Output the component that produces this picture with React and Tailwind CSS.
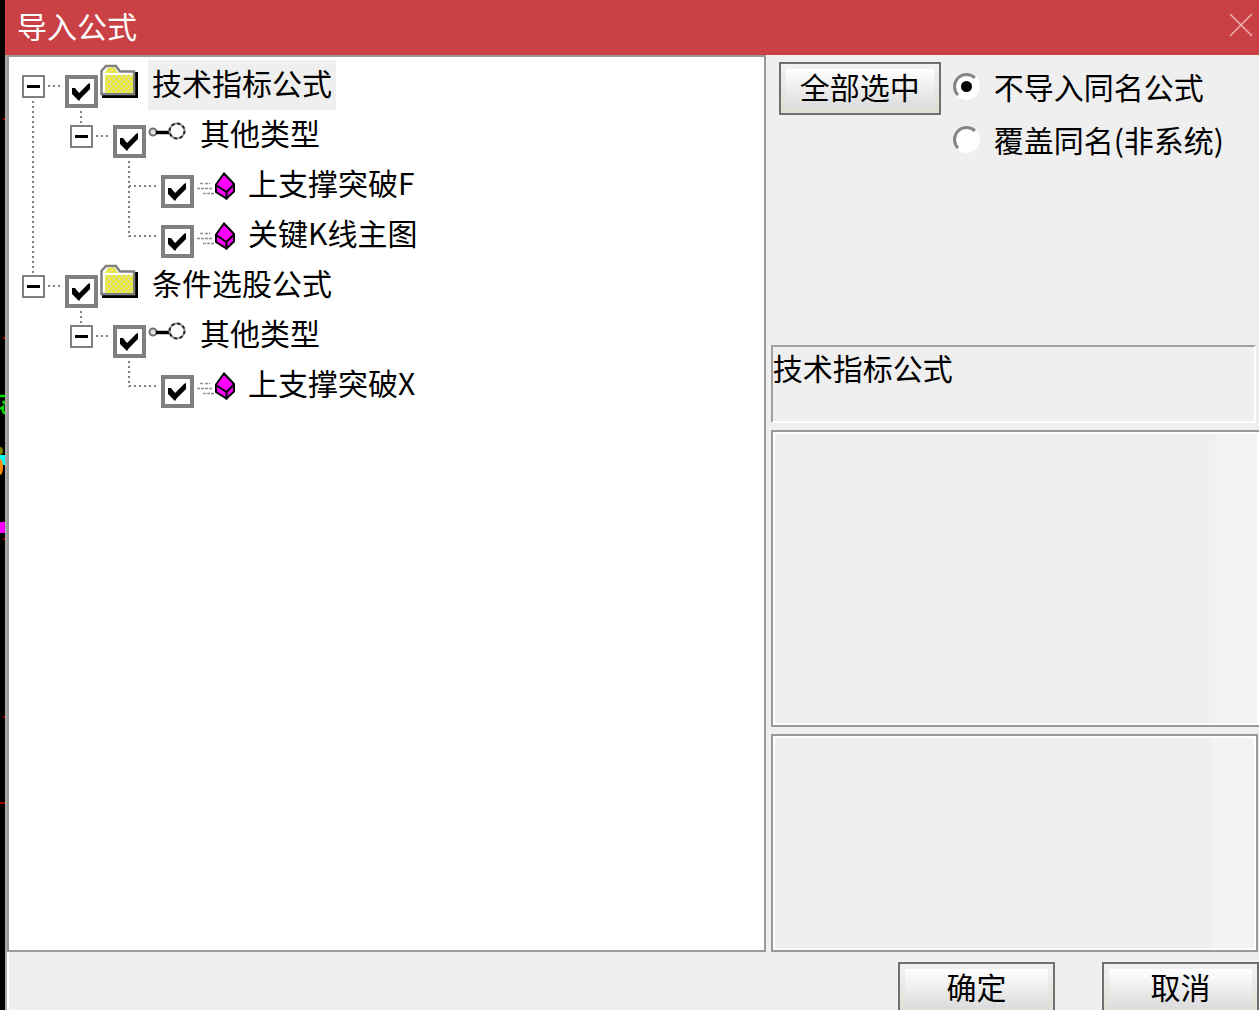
import { useState } from "react";

const TREE = [
  {
    id: "tech",
    name: "技术指标公式",
    icon: "folder",
    children: [
      {
        id: "tech-other",
        name: "其他类型",
        icon: "key",
        children: [
          { id: "tech-f", name: "上支撑突破F", icon: "gem" },
          { id: "tech-k", name: "关键K线主图", icon: "gem" },
        ],
      },
    ],
  },
  {
    id: "pick",
    name: "条件选股公式",
    icon: "folder",
    children: [
      {
        id: "pick-other",
        name: "其他类型",
        icon: "key",
        children: [{ id: "pick-x", name: "上支撑突破X", icon: "gem" }],
      },
    ],
  },
];

const ALL_IDS = ["tech", "tech-other", "tech-f", "tech-k", "pick", "pick-other", "pick-x"];

function FolderIcon() {
  return (
    <svg width="38" height="50" viewBox="0 0 38 50" aria-hidden="true">
      <defs>
        <pattern id="dither" width="5" height="5" patternUnits="userSpaceOnUse">
          <rect width="5" height="5" fill="#ecec10" />
          <rect width="2.5" height="2.5" fill="#dedea0" />
          <rect x="2.5" y="2.5" width="2.5" height="2.5" fill="#dedea0" />
        </pattern>
      </defs>
      <path d="M2 36.5h34.500V12" fill="none" stroke="#000" strokeWidth="3" />
      <path d="M1.500 34V11L6 6h10l4 5.500h14V34z" fill="#fff" stroke="#808080" strokeWidth="2.500" />
      <path d="M5 13l3-5.500h7l3 5.500z" fill="url(#dither)" />
      <rect x="5" y="15" width="28" height="18" fill="url(#dither)" />
    </svg>
  );
}

function KeyIcon() {
  return (
    <svg width="38" height="50" viewBox="0 0 38 50" aria-hidden="true">
      <circle cx="5" cy="22" r="3.5" fill="#e4e4e4" stroke="#707070" strokeWidth="2" />
      <path d="M8 22.5h13" stroke="#000" strokeWidth="3.5" />
      <circle cx="29" cy="21" r="7.5" fill="#fff" stroke="#909090" strokeWidth="2" />
      <circle cx="29" cy="21" r="7.5" fill="none" stroke="#222" strokeWidth="2" strokeDasharray="3 2.9" />
    </svg>
  );
}

function GemIcon() {
  return (
    <svg width="38" height="50" viewBox="0 0 38 50" className="overflow-visible" aria-hidden="true">
      <path d="M4 23.5h3M9 23.5h5M1 28.5h16M7 33.5h12" stroke="#909090" strokeWidth="1.5" strokeDasharray="3 1" />
      <path d="M28 13.5L38 24v7.500l-7.500 7L20 32v-7.500z" fill="#f0f" stroke="#000" strokeWidth="2" />
      <path d="M20 25l10.500 7L38 24.500M30.500 32v7.500" fill="none" stroke="#000" strokeWidth="2" />
    </svg>
  );
}

const ICONS = { folder: FolderIcon, key: KeyIcon, gem: GemIcon };

// One 48px column of dotted connector lines; a toggle sits over the middle of it.
function Guide({ top, bottom, right }) {
  return (
    <svg width="48" height="50" viewBox="0 0 48 50" className="shrink-0 overflow-visible" aria-hidden="true">
      <g stroke="#808080" strokeWidth="2" strokeDasharray="2 3">
        {top && <path d="M24 1V27" />}
        {bottom && <path d="M24 26V50" />}
        {right && <path d="M24 26H51" />}
      </g>
    </svg>
  );
}

function CheckBox({ checked, onChange }) {
  return (
    <span className="mt-[15px] ml-2 grid size-[33px] shrink-0 place-items-center self-start">
      <input
        type="checkbox"
        checked={checked}
        onChange={onChange}
        className="col-start-1 row-start-1 size-full appearance-none border-4 border-[#808080] bg-white"
      />
      {checked && (
        <svg width="19" height="18" viewBox="0 0 19 18" className="pointer-events-none col-start-1 row-start-1" aria-hidden="true">
          <path d="M0 5h3l4 5L16 1l2-1v6L9 15l-2 3-3-3-4-4z" fill="#000" />
        </svg>
      )}
    </span>
  );
}

function TreeNode({ node, last, first, trail, state }) {
  const Icon = ICONS[node.icon];
  const open = !state.closed.includes(node.id);
  const isRoot = trail.length === 0;
  return (
    <li>
      <div className="flex h-[50px]">
        {trail.map((line, i) => (
          <Guide key={i} top={line} bottom={line} />
        ))}
        <div className="grid shrink-0">
          <div className="col-start-1 row-start-1">
            <Guide top={!(isRoot && first)} bottom={!last} right />
          </div>
          {node.children && (
            <button
              type="button"
              aria-label={open ? "折叠" : "展开"}
              onClick={() => state.toggleOpen(node.id)}
              className="col-start-1 row-start-1 mt-[13px] flex size-[27px] items-center justify-center self-start justify-self-center bg-white"
            >
              <span className="flex size-[23px] items-center justify-center border-2 border-[#808080]">
                <span className="h-[3px] w-[13px] bg-black" />
              </span>
            </button>
          )}
        </div>
        <label className="flex items-center">
          <CheckBox checked={state.checked.includes(node.id)} onChange={() => state.toggleCheck(node)} />
          <span className="ml-0.5 shrink-0">
            <Icon />
          </span>
          <span
            className={`ml-2.5 flex h-[50px] items-center px-1 pb-1.5 whitespace-nowrap ${state.selected === node.id ? "bg-[#efefef]" : ""}`}
          >
            {node.name}
          </span>
        </label>
      </div>
      {node.children && open && (
        <ul>
          {node.children.map((child, i) => (
            <TreeNode
              key={child.id}
              node={child}
              first={i === 0}
              last={i === node.children.length - 1}
              trail={[...trail, !last]}
              state={state}
            />
          ))}
        </ul>
      )}
    </li>
  );
}

function PushButton({ className, onClick, children }) {
  return (
    <button
      type="button"
      onClick={onClick}
      className={`flex h-[53px] shrink-0 border-2 border-[#707070] bg-linear-to-b from-[#f2f2f2] to-[#e0ddd4] p-[5px] ${className}`}
    >
      <span className="flex flex-1 items-center justify-center self-stretch bg-linear-to-b from-white to-[#dcdcdc] pb-1.5 leading-8">
        {children}
      </span>
    </button>
  );
}

function Radio({ value, mode, setMode, children }) {
  return (
    <label className="flex h-[53px] items-center gap-3.5">
      <span className="mb-1 grid size-[27px] shrink-0 place-items-center">
        <input
          type="radio"
          name="mode"
          checked={mode === value}
          onChange={() => setMode(value)}
          className="col-start-1 row-start-1 size-full appearance-none rounded-full border-[3px] border-t-[#858585] border-r-white border-b-white border-l-[#858585] bg-white"
        />
        {mode === value && <span className="pointer-events-none col-start-1 row-start-1 size-[11px] rounded-full bg-black" />}
      </span>
      <span className="pb-1.5 whitespace-nowrap">{children}</span>
    </label>
  );
}

function TextPanel({ label, className }) {
  return (
    <div className={`flex min-h-0 border-2 border-[#999999] bg-white p-0.5 ${className}`}>
      <textarea readOnly aria-label={label} className="min-w-0 flex-1 resize-none bg-[#efefef] outline-none" />
      <div className="w-[42px] shrink-0 bg-[#f4f3f1]" />
    </div>
  );
}

// Sliver of the stock chart that shows behind the dialog
function ChartEdge() {
  return (
    <div className="w-[5px] shrink-0 bg-black">
      <svg width="5" height="1010" viewBox="0 0 5 1010" aria-hidden="true">
        <path d="M3 119h2M3 338h2M3 539h2M3 717h2M0 803h5" stroke="#a00000" strokeWidth="2" />
        <path d="M0 396h5M3 401l2 3M0 409l3-2v4l2 3" fill="none" stroke="#00e000" strokeWidth="2.5" />
        <ellipse cx="0" cy="451" rx="3" ry="4" fill="#808000" />
        <rect y="455" width="5" height="10" fill="#00ffff" />
        <ellipse cx="0" cy="467" rx="3" ry="8" fill="#ff8c00" />
        <rect y="522" width="5" height="11" fill="#ff00ff" />
      </svg>
    </div>
  );
}

export default function App() {
  const [checked, setChecked] = useState(ALL_IDS);
  const [closed, setClosed] = useState([]);
  const [mode, setMode] = useState("skip");

  const idsOf = (node) => [node.id, ...(node.children || []).flatMap(idsOf)];

  const toggleCheck = (node) => {
    const ids = idsOf(node);
    setChecked((prev) =>
      prev.includes(node.id) ? prev.filter((id) => !ids.includes(id)) : [...new Set([...prev, ...ids])]
    );
  };

  const toggleOpen = (id) => {
    setClosed((prev) => (prev.includes(id) ? prev.filter((c) => c !== id) : [...prev, id]));
  };

  const state = { checked, closed, selected: "tech", toggleCheck, toggleOpen };

  return (
    <div className="flex h-screen overflow-hidden bg-black font-['Noto_Sans_CJK_SC',sans-serif] text-[30px] leading-10 text-black">
      <ChartEdge />
      <main className="flex min-w-0 flex-1 flex-col bg-[#efefef]">
        <header className="flex h-[55px] shrink-0 items-center justify-between bg-[#c94144] pr-1.5 pb-1.5 pl-3 text-white">
          <h1>导入公式</h1>
          <button type="button" aria-label="关闭">
            <svg width="24" height="24" viewBox="0 0 24 24" aria-hidden="true">
              <path d="M1 1l22 22M23 1L1 23" stroke="#eab4b5" strokeWidth="1.5" />
            </svg>
          </button>
        </header>

        <div className="flex min-h-0 flex-1 flex-col border-l-2 border-[#aaaaaa]">
          <div className="flex min-h-0 flex-1 gap-[5px]">
            <ul className="min-w-0 flex-1 overflow-hidden border-2 border-[#999999] bg-white pt-[3px]">
              {TREE.map((node, i) => (
                <TreeNode
                  key={node.id}
                  node={node}
                  first={i === 0}
                  last={i === TREE.length - 1}
                  trail={[]}
                  state={state}
                />
              ))}
            </ul>

            <section className="grid w-[39%] shrink-0 grid-rows-[283px_78px_15fr_11fr] gap-[7px]">
              <div className="flex items-start gap-3 pt-[7px] pl-2">
                <PushButton className="w-[162px]" onClick={() => setChecked(ALL_IDS)}>
                  全部选中
                </PushButton>
                <div>
                  <Radio value="skip" mode={mode} setMode={setMode}>
                    不导入同名公式
                  </Radio>
                  <Radio value="overwrite" mode={mode} setMode={setMode}>
                    覆盖同名(非系统)
                  </Radio>
                </div>
              </div>
              <p className="mr-[3px] border-2 border-t-[#a0a0a0] border-r-white border-b-white border-l-[#a0a0a0]">
                技术指标公式
              </p>
              <TextPanel label="公式说明" className="border-r-0" />
              <TextPanel label="参数说明" className="mr-px" />
            </section>
          </div>

          <footer className="flex h-[58px] shrink-0 items-start justify-end gap-[47px] overflow-hidden border-l-2 border-white pt-2.5">
            <PushButton className="w-[157px]">确定</PushButton>
            <PushButton className="w-[157px]">取消</PushButton>
          </footer>
        </div>
      </main>
    </div>
  );
}
